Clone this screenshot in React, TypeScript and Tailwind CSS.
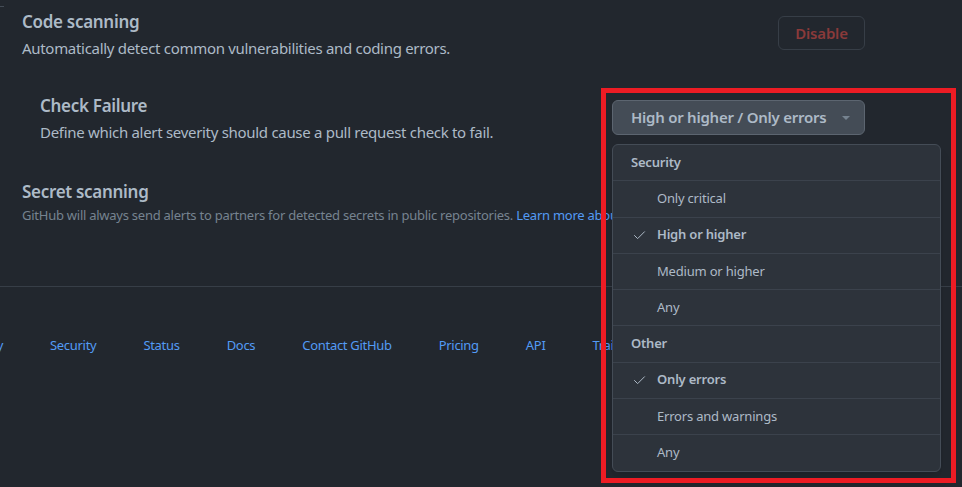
import { Check } from "lucide-react";

const footerLinks = ["Security", "Status", "Docs", "Contact GitHub", "Pricing", "API", "Training"];

function MenuHeader({ label }: { label: string }) {
  return (
    <div className="h-[36.25px] flex items-center pl-[18px] text-[13px] tracking-[-0.2px] font-semibold text-[#adbac7] border-b border-[#3b424c]">
      {label}
    </div>
  );
}

function MenuItem({ label, checked, last }: { label: string; checked?: boolean; last?: boolean }) {
  return (
    <div
      className={
        "h-[36.25px] flex items-center text-[13px] tracking-[-0.2px] text-[#adbac7] " +
        (last ? "" : "border-b border-[#3b424c] ") +
        (checked ? "font-semibold" : "")
      }
    >
      <span className="w-[44px] flex justify-end pr-[10px]">
        {checked && <Check size={15} strokeWidth={1.6} className="text-[#adbac7]" />}
      </span>
      {label}
    </div>
  );
}

function SeverityMenu() {
  return (
    <div className="absolute left-0 top-[44px] w-[329px] bg-[#2d333b] border border-[#444c56] rounded-md overflow-hidden z-10 shadow-lg">
      <MenuHeader label="Security" />
      <MenuItem label="Only critical" />
      <MenuItem label="High or higher" checked />
      <MenuItem label="Medium or higher" />
      <MenuItem label="Any" />
      <MenuHeader label="Other" />
      <MenuItem label="Only errors" checked />
      <MenuItem label="Errors and warnings" />
      <MenuItem label="Any" last />
    </div>
  );
}

export default function App() {
  return (
    <div
      className="relative w-[962px] h-[487px] overflow-hidden bg-[#22272e] text-[#adbac7]"
      style={{ fontFamily: '"Noto Sans", "Open Sans", sans-serif' }}
    >
      <div className="absolute left-0 top-[6px] w-[4px] h-px bg-[#444c56]" />

      <div className="pl-[22px] pr-[97px] pt-[9px]">
        <div className="flex items-start justify-between">
          <div>
            <h3 className="text-[17px] leading-[26px] tracking-[-0.3px] font-semibold">Code scanning</h3>
            <p className="mt-[2px] text-[15px] leading-[22px] tracking-[-0.3px]">
              Automatically detect common vulnerabilities and coding errors.
            </p>
          </div>
          <button className="mt-[7px] w-[87px] h-[34px] rounded-md border border-[#373e47] text-[15px] tracking-[-0.2px] font-semibold text-[#8a3a3a]">
            Disable
          </button>
        </div>

        <div className="mt-[34px] pl-[18px] flex items-start justify-between">
          <div>
            <h4 className="text-[17px] leading-[26px] tracking-[-0.3px] font-semibold">Check Failure</h4>
            <p className="mt-[2px] text-[15px] leading-[22px] tracking-[-0.3px]">
              Define which alert severity should cause a pull request check to fail.
            </p>
          </div>
          <div className="relative mt-[7px]">
            <button className="w-[253px] h-[35px] rounded-md border border-[#5c6570] bg-[#444c56] flex items-center pl-[18px] text-[15px] tracking-[-0.25px] font-semibold text-[#adbac7]">
              High or higher / Only errors
              <span className="ml-[16px] w-0 h-0 border-l-[4px] border-r-[4px] border-t-[4px] border-l-transparent border-r-transparent border-t-[#768390]" />
            </button>
            <SeverityMenu />
          </div>
        </div>

        <div className="mt-[36px]">
          <h3 className="text-[17px] leading-[26px] tracking-[-0.3px] font-semibold">Secret scanning</h3>
          <p className="text-[13px] leading-[20px] tracking-[-0.25px] text-[#768390] whitespace-nowrap">
            GitHub will always send alerts to partners for detected secrets in public repositories.{" "}
            <a className="text-[#539bf5]">Learn more about partner patterns</a>
          </p>
        </div>
      </div>

      <div className="mt-[61px] border-t border-[#373e47]" />

      <div className="mt-[48px] flex gap-[47px] text-[13px] leading-[20px] tracking-[-0.3px] text-[#539bf5] whitespace-nowrap">
        <div className="w-[60px] ml-[-57px] text-right">Privacy</div>
        {footerLinks.map((l) => (
          <a key={l}>{l}</a>
        ))}
      </div>

      <div className="absolute left-[601px] top-[88px] w-[355px] h-[395px] border-[5px] border-[#ed1c24] z-20 pointer-events-none" />
    </div>
  );
}
